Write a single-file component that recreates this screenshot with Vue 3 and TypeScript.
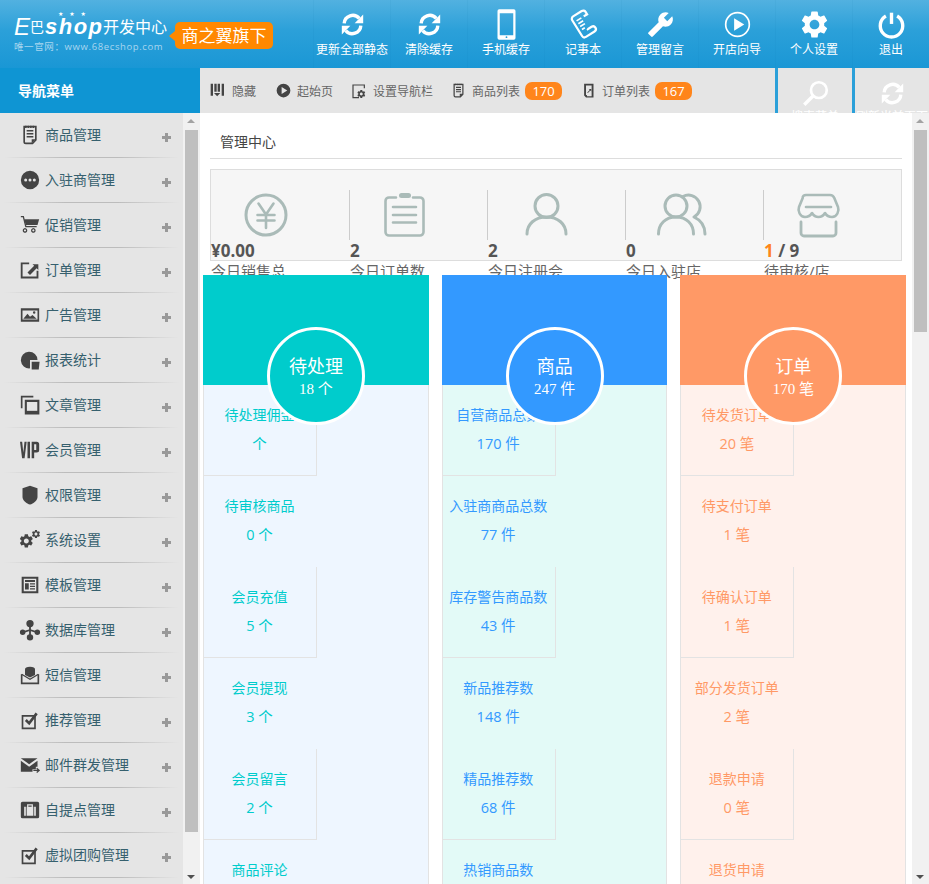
<script setup lang="ts">
interface Seg { d: string; s?: number; w?: string }
type Icon = Seg[]

const refresh: Icon = [
  { d: 'M4.600 11A7.600 7.600 0 0 1 18 6.600', s: 3 },
  { d: 'M21.500 3.200v7.600h-7.600z' },
  { d: 'M19.400 13A7.600 7.600 0 0 1 6 17.400', s: 3 },
  { d: 'M2.500 20.800v-7.600h7.600z' },
]
const gear = 'M19.140 12.940c.04-.3.06-.61.06-.94 0-.32-.02-.64-.07-.94l2.030-1.580c.18-.14.23-.41.12-.61l-1.920-3.320c-.12-.22-.37-.29-.59-.22l-2.390.96c-.5-.38-1.030-.7-1.620-.94l-.36-2.540c-.04-.24-.24-.41-.48-.41h-3.840c-.24 0-.43.17-.47.41l-.36 2.540c-.59.24-1.130.57-1.620.94l-2.390-.96c-.22-.08-.47 0-.59.22L2.740 8.870c-.12.21-.08.47.12.61l2.030 1.580c-.05.3-.09.63-.09.94s.02.64.07.94l-2.030 1.580c-.18.14-.23.41-.12.61l1.920 3.320c.12.22.37.29.59.22l2.390-.96c.5.38 1.030.7 1.620.94l.36 2.540c.05.24.24.41.48.41h3.840c.24 0 .44-.17.47-.41l.36-2.540c.59-.24 1.130-.56 1.620-.94l2.390.96c.22.08.47 0 .59-.22l1.920-3.320c.12-.22.07-.47-.12-.61l-2.010-1.580zM12 15.600c-1.980 0-3.600-1.620-3.600-3.600s1.620-3.600 3.600-3.600 3.600 1.620 3.600 3.600-1.620 3.600-3.600 3.600z'
const notePad: Icon = [
  { d: 'M5 2h14v16l-4 4H7a2 2 0 0 1-2-2z', s: 2 },
  { d: 'M8 7h8M8 10.500h8M8 14h8M7 1v2.500M10 1v2.500M13 1v2.500M16 1v2.500', s: 1.800 },
  { d: 'M14 22v-5h5' },
]
const tick: Icon = [{ d: 'M3 7h15v15H3z', s: 2 }, { d: 'M7 12l4 4 9-12', s: 3.200 }]

const topNav: { label: string; icon: Icon }[] = [
  { label: '更新全部静态', icon: refresh },
  { label: '清除缓存', icon: refresh },
  { label: '手机缓存', icon: [{ d: 'M5.500-1.500h13A1.500 1.500 0 0 1 20 0v24a1.500 1.500 0 0 1-1.500 1.500h-13A1.500 1.500 0 0 1 4 24V0a1.500 1.500 0 0 1 1.500-1.500zM6 2v19.500h12V2zM12 22.500a.8.8 0 1 0 0 1.600.8.8 0 0 0 0-1.600z' }] },
  { label: '记事本', icon: [
    { d: 'M8 1h9a2.500 2.500 0 0 1 2.500 2.500V6H16M8 1a2.500 2.500 0 0 0-2.500 2.500V20a2.500 2.500 0 0 0 2.500 2.500h9a2.500 2.500 0 0 0 0-5H13V17', s: 2, w: 'rotate(-32 12 12)' },
    { d: 'M8.500 6h5M8.500 9h5M8.500 12h5M8.500 15h3', s: 1.500, w: 'rotate(-32 12 12)' },
  ] },
  { label: '管理留言', icon: [{ d: 'M22.700 19l-9.100-9.100c.9-2.300.4-5-1.500-6.900-2-2-5-2.400-7.400-1.300L9 6 6 9 1.600 4.700C.4 7.100.9 10.100 2.900 12.100c1.900 1.900 4.600 2.400 6.900 1.500l9.100 9.100c.4.4 1 .4 1.400 0l2.300-2.300c.5-.4.5-1.100.1-1.400z', w: 'translate(24 0) scale(-1 1)' }] },
  { label: '开店向导', icon: [{ d: 'M12 1.500a10.500 10.500 0 1 0 0 21 10.500 10.500 0 0 0 0-21z', s: 1.500 }, { d: 'M9 6.500l9 5.500-9 5.500z' }] },
  { label: '个人设置', icon: [{ d: gear, w: 'translate(-2.400 -2.400) scale(1.200)' }] },
  { label: '退出', icon: [{ d: 'M12 1.500v10', s: 3 }, { d: 'M7 4.500a10 10 0 1 0 10 0', s: 3 }] },
]

const subNav: { label: string; icon: Icon; size: number; badge?: number }[] = [
  { label: '隐藏', size: 16, icon: [{ d: 'M1 1h3.500v18H1zM6.500 1H10v12H6.500zM11.500 1H15v12h-3.500zM17.500 1H21v18h-3.500zM6 15h9.500l-4.750 5z' }] },
  { label: '起始页', size: 15, icon: [{ d: 'M12 1a11 11 0 1 0 0 22 11 11 0 0 0 0-22zM9 6.500l9 5.500-9 5.500z' }] },
  { label: '设置导航栏', size: 16, icon: [{ d: 'M20 8V3H3v19h9', s: 1.800 }, { d: gear, w: 'translate(8 9) scale(.62)' }] },
  { label: '商品列表', size: 15, badge: 170, icon: notePad },
  { label: '订单列表', size: 15, badge: 167, icon: [{ d: 'M5 1h15v22H8l-3-3zM8 4v15h1.500v2H17V4z' }, { d: 'M10 15l4-4-1.500-1.500H16.500V13.500L15 12l-4 4z' }] },
]

const menu: { label: string; icon: Icon; w: number }[] = [
  { label: '商品管理', w: 20, icon: notePad },
  { label: '入驻商管理', w: 20, icon: [{ d: 'M12 1a11 11 0 1 0 0 22 11 11 0 0 0 0-22zM6.800 10.200a1.800 1.800 0 1 1 0 3.600 1.800 1.800 0 0 1 0-3.600zM12 10.200a1.800 1.800 0 1 1 0 3.600 1.800 1.800 0 0 1 0-3.600zM17.200 10.200a1.800 1.800 0 1 1 0 3.600 1.800 1.800 0 0 1 0-3.600z' }] },
  { label: '促销管理', w: 20, icon: [{ d: 'M1 2h3l3 12h13', s: 1.600 }, { d: 'M5 5h18l-2 7H7z' }, { d: 'M8 18.500a2 2 0 1 0 0 .01zM18 18.500a2 2 0 1 0 0 .01z', s: 1.500 }] },
  { label: '订单管理', w: 20, icon: [{ d: 'M11 4H2v17h19v-8', s: 2.200 }, { d: 'M9 15l8-8-2-2h7v7l-2-2-8 8z' }] },
  { label: '广告管理', w: 20, icon: [{ d: 'M1 4h22v16H1zM3 6.500v11h18v-11z' }, { d: 'M4 16.500l5-6 3 3.500 3-2 5 4.500zM17 7.500a1.500 1.500 0 1 1 0 3 1.500 1.500 0 0 1 0-3z' }] },
  { label: '报表统计', w: 20, icon: [{ d: 'M21 12A10 10 0 1 0 12 22V12z' }, { d: 'M14 14h9.500l-1 9.500H14z' }] },
  { label: '文章管理', w: 20, icon: [{ d: 'M16 2H2v14', s: 2 }, { d: 'M7 7h15v15H7z', s: 2.500 }, { d: 'M7 19h15v3H7z' }] },
  { label: '会员管理', w: 20, icon: [{ d: 'M0 2h2.600l1.400 13 1.400-13H8L5.500 22h-3zM9 2h3v20H9zM14 2h6a3 3 0 0 1 3 3v7a3 3 0 0 1-3 3h-3v7h-3zM17 5v7h2.500V5z' }] },
  { label: '权限管理', w: 20, icon: [{ d: 'M12 1l9 3v10c0 5-5 8-9 9.500C8 22 3 19 3 14V4z' }] },
  { label: '系统设置', w: 22, icon: [{ d: gear, w: 'translate(-1 4) scale(.75)' }, { d: gear, w: 'translate(13 0) scale(.46)' }] },
  { label: '模板管理', w: 20, icon: [{ d: 'M2 2h20v20H2zM4.500 4.500v15h15v-15z' }, { d: 'M6 6h12v2.500H6zM6 10h4.500v7.500H6zM12 10h6v1.500h-6zM12 13h6v1.500h-6zM12 16h6v1.500h-6z' }] },
  { label: '数据库管理', w: 22, icon: [{ d: 'M12 12L4 14.500M12 12l8 2.500M12 5v14', s: 2 }, { d: 'M12 1a4 4 0 1 0 0 8 4 4 0 0 0 0-8zM4 11.500a3 3 0 1 0 0 6 3 3 0 0 0 0-6zM20 11.500a3 3 0 1 0 0 6 3 3 0 0 0 0-6zM12 16.500a3.500 3.500 0 1 0 0 7 3.500 3.500 0 0 0 0-7z' }] },
  { label: '短信管理', w: 20, icon: [{ d: 'M2 11v11h20V11', s: 2 }, { d: 'M6 5c0-2 2-3 6-3s6 1 6 3v7l-6 3-6-3z' }, { d: 'M2 11l10 6 10-6', s: 1.500 }] },
  { label: '推荐管理', w: 20, icon: tick },
  { label: '邮件群发管理', w: 20, icon: [{ d: 'M1 4h20l-10 7zM1 7v13h14v-3h4v-3h2V7l-10 7z' }, { d: 'M16 18.500h6M20 16l3 2.500-3 2.500', s: 1.500 }] },
  { label: '自提点管理', w: 20, icon: [{ d: 'M3 2h18a2 2 0 0 1 2 2v16a2 2 0 0 1-2 2H3a2 2 0 0 1-2-2V4a2 2 0 0 1 2-2zM5 8v11h2V8zM17 8v11h2V8zM8.500 5v3H8v11h8V8h-.5V5zM10 6.500h4V8h-4z' }] },
  { label: '虚拟团购管理', w: 20, icon: tick },
]

const statIcons: Icon[] = [
  [{ d: 'M22 2a20 20 0 1 0 0 40 20 20 0 0 0 0-40z', s: 3 }, { d: 'M14.500 10.500L22 21.500l7.500-11M13.500 22h17M13.500 27.500h17M22 21.500V35', s: 2.600 }],
  [{ d: 'M13 4.500H6A3.500 3.500 0 0 0 2.500 8v31A3.500 3.500 0 0 0 6 42.500h31a3.500 3.500 0 0 0 3.500-3.500V8A3.500 3.500 0 0 0 37 4.500H30', s: 2.600 }, { d: 'M18.500 0h7a2.500 2.500 0 0 1 0 5h-7a2.500 2.500 0 0 1 0-5z' }, { d: 'M10 14h23M10 22h23M10 29.500h23', s: 2.600 }],
  [{ d: 'M25.500 1.500a11.500 11.500 0 1 0 0 23 11.500 11.500 0 0 0 0-23z', s: 3 }, { d: 'M6 41c0-10 8-17 19.500-17S45 31 45 41', s: 3 }],
  [{ d: 'M17 2a11 11 0 1 0 0 22 11 11 0 0 0 0-22z', s: 3 }, { d: 'M-.5 41c0-10 7-17 17.500-17s17.500 7 17.500 17', s: 3 }, { d: 'M24 3.500a11 11 0 1 1 11 20.500c6.500 3 11 9 11 17', s: 3 }],
  [{ d: 'M9 2h24c2 0 3.500 1 4.300 3l3.700 9c1.500 4-1 10-6 10-3 0-5.500-1.500-7-4-1.500 2.500-3.500 4-6.500 4s-5-1.500-6.500-4c-1.500 2.500-4 4-7 4-5 0-7.500-6-6-10l3.700-9C5.500 3 7 2 9 2z', s: 2.600 }, { d: 'M9 14h25', s: 2.600 }, { d: 'M4 29v11a3 3 0 0 0 3 3h29a3 3 0 0 0 3-3V29', s: 2.800 }],
]

const stats = [
  { label: '今日销售总', num: '¥0.00' },
  { label: '今日订单数', num: '2' },
  { label: '今日注册会', num: '2' },
  { label: '今日入驻店', num: '0' },
  { label: '待审核/店', num: ' / 9', hot: '1' },
]

const cards = [
  { tone: 'teal', title: '待处理', total: '18 个', rows: [['待处理佣金', '个'], ['待审核商品', '0 个'], ['会员充值', '5 个'], ['会员提现', '3 个'], ['会员留言', '2 个'], ['商品评论', '']] },
  { tone: 'blue', title: '商品', total: '247 件', rows: [['自营商品总数', '170 件'], ['入驻商商品总数', '77 件'], ['库存警告商品数', '43 件'], ['新品推荐数', '148 件'], ['精品推荐数', '68 件'], ['热销商品数', '']] },
  { tone: 'orange', title: '订单', total: '170 笔', rows: [['待发货订单', '20 笔'], ['待支付订单', '1 笔'], ['待确认订单', '1 笔'], ['部分发货订单', '2 笔'], ['退款申请', '0 笔'], ['退货申请', '']] },
]
</script>

<template>
  <div class="page">
    <header class="top">
      <div class="brand">
        <div class="logo">
          <div class="logo-main">
            <span class="logo-e">E</span><span class="logo-ba">巴</span><span class="logo-shop">shop</span><span class="logo-cn">开发中心</span>
            <span class="logo-stars">★ ★ ★</span>
          </div>
          <div class="logo-url">唯一官网：www.68ecshop.com</div>
        </div>
        <div class="bubble">商之翼旗下</div>
      </div>
      <nav class="top-nav">
        <a v-for="item in topNav" :key="item.label" class="top-item">
          <svg class="top-ico" viewBox="0 0 24 24">
            <path v-for="(p, i) in item.icon" :key="i" :d="p.d" :transform="p.w" :fill="p.s ? 'none' : '#fff'" :stroke="p.s ? '#fff' : 'none'" :stroke-width="p.s" fill-rule="evenodd" />
          </svg>
          <span>{{ item.label }}</span>
        </a>
      </nav>
    </header>

    <div class="sub">
      <div class="sub-title">导航菜单</div>
      <div class="sub-bar">
        <a v-for="item in subNav" :key="item.label" class="sub-item">
          <svg class="sub-ico" :style="{ width: item.size + 'px', height: item.size + 'px' }" viewBox="0 0 24 24">
            <path v-for="(p, i) in item.icon" :key="i" :d="p.d" :transform="p.w" :fill="p.s ? 'none' : '#444'" :stroke="p.s ? '#444' : 'none'" :stroke-width="p.s" fill-rule="evenodd" />
          </svg>
          <span>{{ item.label }}</span>
          <b v-if="item.badge" class="badge">{{ item.badge }}</b>
        </a>
        <div class="sub-tools">
          <div class="tool">
            <svg class="tool-ico" viewBox="0 0 24 24"><circle cx="15" cy="9" r="7" fill="none" stroke="#fff" stroke-width="2.400" /><path d="M10 14L2 22" stroke="#fff" stroke-width="3" fill="none" /></svg>
            <span class="tool-label">搜索菜单</span>
          </div>
          <div class="tool">
            <svg class="tool-ico" viewBox="0 0 24 24">
              <path v-for="(p, i) in refresh" :key="i" :d="p.d" :fill="p.s ? 'none' : '#fff'" :stroke="p.s ? '#fff' : 'none'" :stroke-width="p.s" />
            </svg>
            <span class="tool-label">刷新当前页面</span>
          </div>
        </div>
      </div>
    </div>

    <div class="body">
      <aside class="side">
        <ul class="menu">
          <li v-for="item in menu" :key="item.label" class="menu-item">
            <span class="menu-ico-wrap">
              <svg class="menu-ico" :style="{ width: item.w + 'px', height: item.w + 'px' }" viewBox="0 0 24 24">
                <path v-for="(p, i) in item.icon" :key="i" :d="p.d" :transform="p.w" :fill="p.s ? 'none' : '#444'" :stroke="p.s ? '#444' : 'none'" :stroke-width="p.s" fill-rule="evenodd" />
              </svg>
            </span>
            <span class="menu-label">{{ item.label }}</span>
            <span class="plus"></span>
          </li>
        </ul>
        <div class="scroll side-scroll">
          <i class="arrow up"></i>
          <div class="thumb"></div>
          <i class="arrow down"></i>
        </div>
      </aside>

      <main class="main">
        <div class="content">
          <div class="title">管理中心</div>
          <div class="stats">
            <div v-for="(s, i) in stats" :key="s.label" class="stat">
              <div class="stat-ico-row" :class="{ sep: i > 0 }">
                <svg class="stat-ico" viewBox="0 0 44 44">
                  <path v-for="(p, k) in statIcons[i]" :key="k" :d="p.d" :fill="p.s ? 'none' : '#aabbb8'" :stroke="p.s ? '#aabbb8' : 'none'" :stroke-width="p.s" stroke-linecap="round" stroke-linejoin="round" />
                </svg>
              </div>
              <div class="stat-num"><em v-if="s.hot">{{ s.hot }}</em>{{ s.num }}</div>
              <div class="stat-label">{{ s.label }}</div>
            </div>
          </div>
          <div class="cards">
            <section v-for="c in cards" :key="c.title" class="card" :class="c.tone">
              <div class="card-head"></div>
              <div class="circle">
                <strong>{{ c.title }}</strong>
                <span>{{ c.total }}</span>
              </div>
              <div class="card-body">
                <div v-for="(r, i) in c.rows" :key="r[0]" class="cell" :class="{ boxed: i % 2 === 0 }">
                  <div class="cell-label">{{ r[0] }}</div>
                  <div class="cell-value">{{ r[1] }}</div>
                </div>
              </div>
            </section>
          </div>
        </div>
        <div class="scroll main-scroll">
          <i class="arrow up"></i>
          <div class="thumb"></div>
          <i class="arrow down"></i>
        </div>
      </main>
    </div>
  </div>
</template>

<style scoped>
.page {
  width: 929px;
  height: 884px;
  overflow: hidden;
  display: flex;
  flex-direction: column;
  font-family: "Open Sans", "Noto Sans CJK SC", sans-serif;
  background: #fff;
}
.top {
  height: 68px;
  flex: none;
  display: flex;
  justify-content: space-between;
  background: linear-gradient(#52b1e0, #2ba0d9 45%, #1a97d5);
}
.brand { display: flex; align-items: flex-start; padding: 15px 0 0 14px; }
.logo { width: 155px; color: #fff; }
.logo-main { position: relative; display: flex; align-items: center; height: 24px; white-space: nowrap; }
.logo-e { font: italic 400 24px/24px "Liberation Sans", sans-serif; width: 16px; }
.logo-ba { font-size: 14px; line-height: 24px; width: 15px; }
.logo-shop { font: italic 700 22px/24px "Liberation Sans", sans-serif; width: 58px; letter-spacing: 1.500px; }
.logo-cn { font-size: 16px; line-height: 24px; }
.logo-stars { position: absolute; left: 44px; top: -5px; font-size: 6px; line-height: 7px; letter-spacing: 2px; font-family: "DejaVu Sans", sans-serif; }
.logo-url { font-size: 9.500px; line-height: 12px; margin-top: 2px; color: #a9d6ef; letter-spacing: .62px; white-space: nowrap; }
.bubble {
  position: relative;
  margin: 7px 0 0 6px;
  width: 98px;
  height: 27px;
  line-height: 27px;
  text-align: center;
  font-size: 17px;
  color: #fff;
  background: #ff8800;
  border-radius: 5px;
}
.bubble::before {
  content: "";
  position: absolute;
  left: -6px;
  top: 9px;
  border-top: 5px solid transparent;
  border-bottom: 5px solid transparent;
  border-right: 6px solid #ff8800;
}
.top-nav { display: flex; }
.top-item {
  width: 77px;
  display: flex;
  flex-direction: column;
  align-items: center;
  color: #fff;
  font-size: 12px;
  line-height: 16px;
  padding-top: 11px;
  box-sizing: border-box;
  border-left: 1px solid rgba(0, 90, 150, .05);
  white-space: nowrap;
}
.top-ico { width: 27px; height: 27px; margin-bottom: 4px; overflow: visible; }

.sub { height: 45px; flex: none; display: flex; }
.sub-title {
  width: 200px;
  box-sizing: border-box;
  padding-left: 18px;
  line-height: 45px;
  background: #0f95d3;
  color: #fff;
  font-size: 14px;
  font-weight: 700;
}
.sub-bar { flex: 1; display: flex; align-items: center; background: #e5e5e5; padding-left: 10px; font-size: 12px; color: #666; position: relative; }
.sub-item { display: flex; align-items: center; white-space: nowrap; margin-right: 18px; }
.sub-item:nth-child(1) { margin-right: 20px; }
.sub-item:nth-child(4) { margin-right: 19px; }
.sub-ico { margin-right: 6px; flex: none; }
.badge {
  margin-left: 5px;
  width: 37px;
  height: 18px;
  line-height: 18px;
  border-radius: 7px;
  background: #ff851b;
  color: #fff;
  text-align: center;
  font-size: 13px;
  font-weight: 400;
}
.sub-tools { margin-left: auto; display: flex; height: 45px; }
.tool {
  width: 77px;
  height: 45px;
  border-left: 3px solid #2ba0d9;
  display: flex;
  flex-direction: column;
  align-items: center;
  padding-top: 12px;
  box-sizing: border-box;
  flex: none;
  overflow: hidden;
}
.tool-ico { width: 27px; height: 27px; flex: none; }
.tool-label { color: #fff; font-size: 12px; line-height: 16px; white-space: nowrap; margin-top: 2px; flex: none; }

.body { flex: 1; min-height: 0; display: flex; }
.side { width: 200px; flex: none; display: flex; background: #e5e5e5; }
.menu { list-style: none; margin: 0; padding: 0; width: 183px; flex: none; }
.menu-item {
  position: relative;
  height: 45px;
  box-sizing: border-box;
  display: flex;
  align-items: flex-start;
  padding: 12px 0 0 18px;
  color: #36606e;
  font-size: 14px;
  line-height: 20px;
}
.menu-item::after {
  content: "";
  position: absolute;
  left: 4px;
  right: 4px;
  bottom: 0;
  height: 1px;
  background: linear-gradient(90deg, #e5e5e5, #bcbcbc 35%, #bcbcbc 65%, #e5e5e5);
}
.menu-ico-wrap { width: 27px; display: flex; justify-content: center; flex: none; height: 20px; align-items: center; margin-left: -2px; margin-right: 2px; }
.plus {
  position: absolute;
  left: 162px;
  top: 20px;
  width: 9px;
  height: 9px;
  background:
    linear-gradient(#999, #999) center / 9px 3px no-repeat,
    linear-gradient(#999, #999) center / 3px 9px no-repeat;
}
.scroll { width: 17px; flex: none; position: relative; background: #f1f1f1; box-sizing: border-box; }
.thumb { position: absolute; left: 2px; width: 13px; background: #bfbfbf; }
.side-scroll .thumb { top: 17px; height: 702px; }
.main-scroll .thumb { top: 17px; height: 202px; }
.arrow { position: absolute; left: 4px; width: 0; height: 0; border-left: 4px solid transparent; border-right: 4px solid transparent; }
.arrow.up { top: 6px; border-bottom: 4px solid #a3a3a3; }
.arrow.down { bottom: 5px; border-top: 4px solid #505050; }

.main { flex: 1; min-width: 0; display: flex; background: #fff; }
.content { width: 712px; flex: none; overflow: hidden; }
.title {
  margin: 0 10px;
  height: 46px;
  box-sizing: border-box;
  padding: 19px 0 0 10px;
  border-bottom: 1px solid #ddd;
  font-size: 14px;
  line-height: 20px;
  color: #444;
}
.stats {
  margin: 10px 10px 0;
  height: 92px;
  box-sizing: border-box;
  border: 1px solid #ddd;
  background: #f6f6f6;
  display: flex;
}
.stat { width: 138px; flex: none; color: #666; }
.stat-ico-row { margin-top: 20px; height: 50px; display: flex; align-items: center; padding-left: 33px; box-sizing: border-box; }
.stat-ico-row.sep { border-left: 1px solid #ccc; }
.stat-ico { width: 44px; height: 44px; flex: none; overflow: visible; }
.stat:not(:first-child) .stat-num, .stat:not(:first-child) .stat-label { padding-left: 1px; }
.stat-num { font-size: 17px; font-weight: 700; line-height: 21px; color: #555; white-space: pre; }
.stat-num em { font-style: normal; color: #ff851b; }
.stat-label { font-size: 15px; line-height: 20px; white-space: nowrap; }

.cards { position: relative; margin-top: 14px; padding: 0 6px 0 3px; display: flex; gap: 13px; }
.card { flex: 1; position: relative; min-width: 0; color: var(--tone); }
.teal { --tone: #00cccc; --wash: #eef6ff; }
.blue { --tone: #3399ff; --wash: #e3faf7; }
.orange { --tone: #ff9966; --wash: #fff1ec; }
.card-head { height: 110px; background: var(--tone); }
.circle {
  position: absolute;
  left: 64px;
  top: 52px;
  width: 98px;
  height: 98px;
  box-sizing: border-box;
  border: 3px solid #fff;
  border-radius: 50%;
  background: var(--tone);
  color: #fff;
  display: flex;
  flex-direction: column;
  align-items: center;
  padding-top: 24px;
  z-index: 1;
}
.circle strong { font-weight: 400; font-size: 18px; line-height: 25px; }
.circle span { font-family: "Liberation Serif", "Noto Sans CJK SC", serif; font-size: 15px; line-height: 20px; }
.card-body { background: var(--wash); border: 1px solid #e3e3e3; border-top: 0; }
.cell { width: 113px; height: 91px; box-sizing: border-box; padding: 20px 2px 0 0; text-align: center; }
.cell.boxed { border-right: 1px solid #e3e3e3; border-bottom: 1px solid #e3e3e3; padding-right: 1px; }
.cell-label { font-size: 14px; line-height: 20px; white-space: nowrap; }
.cell-value { font-size: 14.500px; line-height: 20px; margin-top: 9px; white-space: pre; }
</style>

<style>
html, body { margin: 0; overflow: hidden; }
</style>
